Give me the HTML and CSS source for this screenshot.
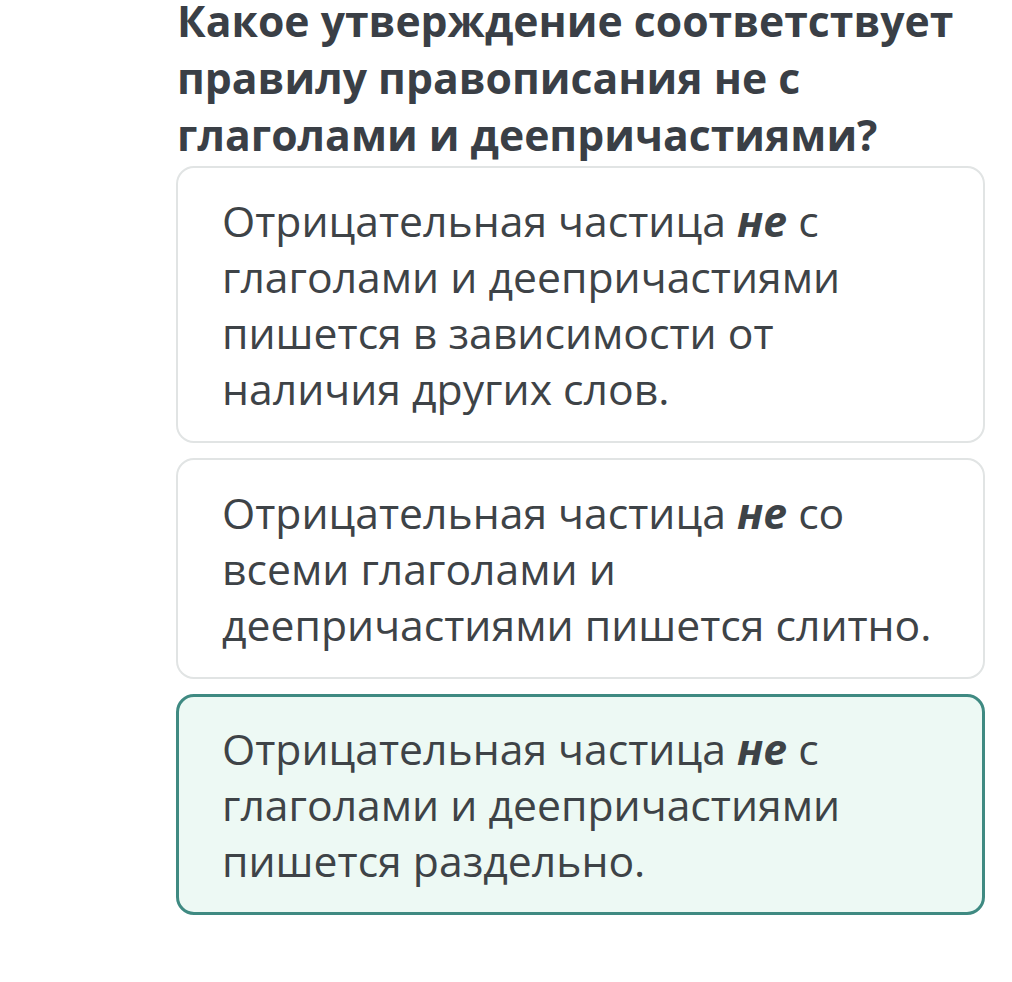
FILE: index.html
```html
<!DOCTYPE html>
<html lang="ru">
<head>
  <meta charset="UTF-8" />
  <meta name="viewport" content="width=device-width, initial-scale=1.0" />
  <title>Вопрос</title>
  <link rel="stylesheet" href="styles.css">
</head>
<body>

  <!-- Question -->
  <div class="quiz">
    <h2 class="question">Какое утверждение соответствует правилу правописания не с глаголами и деепричастиями?</h2>

    <!-- Answers -->
    <div class="answers">
      <div class="answer">
        <p>Отрицательная частица <b><i>не</i></b> с глаголами и деепричастиями пишется в зависимости от наличия других слов.</p>
      </div>
      <div class="answer">
        <p>Отрицательная частица <b><i>не</i></b> со всеми глаголами и деепричастиями пишется слитно.</p>
      </div>
      <div class="answer selected">
        <p>Отрицательная частица <b><i>не</i></b> с глаголами и деепричастиями пишется раздельно.</p>
      </div>
    </div>
  </div>

</body>
</html>
```

FILE: styles.css
```css
* {
  margin: 0;
  padding: 0;
  box-sizing: border-box;
  font-family: 'Open Sans', sans-serif;
}
body {
  background: #ffffff;
  color: #3c4146;
}
.quiz {
  margin-left: 176px;
  width: 809px;
}
.question {
  font-size: 42.7px;
  font-weight: 700;
  line-height: 57px;
  color: #3a3f46;
  margin-top: -8px;
  padding-left: 1px;
}
.answers {
  display: flex;
  flex-direction: column;
  gap: 15px;
  margin-top: 3px;
}
.answer {
  border: 2px solid #e1e4e4;
  border-radius: 18px;
  padding: 25px 48px 24px 44px;
  background: #ffffff;
}
.answer p {
  font-size: 42.7px;
  line-height: 56px;
  color: #3e4347;
}
.answer b {
  font-weight: 700;
}
.answer.selected {
  border: 3px solid #3f8a82;
  background: #edf9f4;
  padding: 24px 47px 23px 43px;
}
```
